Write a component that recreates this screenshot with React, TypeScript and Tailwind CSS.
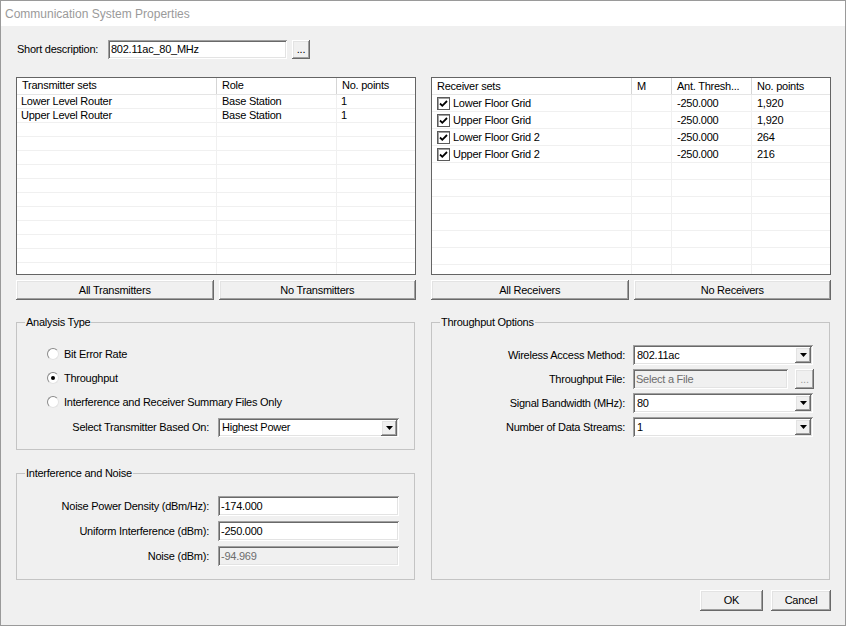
import React from 'react';

const raised =
  'bg-[#f0f0f0] shadow-[inset_-1px_-1px_#696969,inset_1px_1px_#ffffff,inset_-2px_-2px_#a0a0a0,inset_2px_2px_#e3e3e3]';
const sunken =
  'shadow-[inset_1px_1px_#a0a0a0,inset_-1px_-1px_#ffffff,inset_2px_2px_#696969,inset_-2px_-2px_#e3e3e3]';

const Button = ({ label, className }: { label: string; className: string }) => (
  <div className={`${raised} ${className} flex items-center justify-center`}>{label}</div>
);

const Field = ({ value, className, disabled }: { value: string; className: string; disabled?: boolean }) => (
  <div
    className={`${sunken} ${className} flex items-center pl-[3px] ${
      disabled ? 'bg-[#f0f0f0] text-[#6d6d6d]' : 'bg-white'
    }`}
  >
    {value}
  </div>
);

const Combo = ({ value, className }: { value: string; className: string }) => (
  <div className={`${sunken} ${className} flex items-center bg-white`}>
    <span className="flex-1 pl-[4px]">{value}</span>
    <div className={`${raised} mr-[2px] flex h-[16px] w-[16px] items-center justify-center`}>
      <svg width="7" height="4" viewBox="0 0 7 4">
        <path d="M0 0h7L3.5 4z" fill="#000" />
      </svg>
    </div>
  </div>
);

const Radio = ({ checked, label }: { checked?: boolean; label: string }) => (
  <div className="flex h-[24px] items-center">
    <div className="flex h-[12px] w-[12px] items-center justify-center rounded-full border border-t-[#8a8a8a] border-l-[#8a8a8a] border-r-[#e3e3e3] border-b-[#e3e3e3] bg-white">
      {checked && <div className="h-[4px] w-[4px] rounded-full bg-black" />}
    </div>
    <span className="ml-[5px]">{label}</span>
  </div>
);

const Check = () => (
  <div className="flex h-[13px] w-[13px] items-center justify-center border border-[#5a5a5a] bg-white shadow-[inset_1px_1px_#a0a0a0]">
    <svg width="9" height="9" viewBox="0 0 9 9">
      <path d="M1 4.5l2.3 2.3L8 2" stroke="#000" strokeWidth="1.8" fill="none" />
    </svg>
  </div>
);

const Group = ({ title, className, children }: { title: string; className: string; children: React.ReactNode }) => (
  <div className={`relative border border-[#c4c4c4] ${className}`}>
    <span className="absolute -top-[7px] left-[8px] bg-[#f0f0f0] px-[1px] leading-[13px]">{title}</span>
    {children}
  </div>
);

const txRows = [
  ['Lower Level Router', 'Base Station', '1'],
  ['Upper Level Router', 'Base Station', '1'],
];

const rxRows = [
  ['Lower Floor Grid', '', '-250.000', '1,920'],
  ['Upper Floor Grid', '', '-250.000', '1,920'],
  ['Lower Floor Grid 2', '', '-250.000', '264'],
  ['Upper Floor Grid 2', '', '-250.000', '216'],
];

const TransmitterTable = () => (
  <div className="h-[198px] w-[400px] overflow-hidden border border-[#646464] bg-white">
    <div className="grid h-[17px] grid-cols-[200px_120px_78px] border-b border-[#e5e5e5]">
      <div className="border-r border-[#d5d5d5] pl-[5px] leading-[15px]">Transmitter sets</div>
      <div className="border-r border-[#d5d5d5] pl-[5px] leading-[15px]">Role</div>
      <div className="pl-[5px] leading-[15px]">No. points</div>
    </div>
    {Array.from({ length: 13 }).map((_, i) => {
      const r = txRows[i] || ['', '', ''];
      return (
        <div key={i} className="grid h-[14px] grid-cols-[200px_120px_78px] border-b border-[#f0f0f0]">
          <div className="border-r border-[#f0f0f0] pl-[4px] leading-[13px]">{r[0]}</div>
          <div className="border-r border-[#f0f0f0] pl-[5px] leading-[13px]">{r[1]}</div>
          <div className="pl-[4px] leading-[13px]">{r[2]}</div>
        </div>
      );
    })}
  </div>
);

const ReceiverTable = () => (
  <div className="h-[198px] w-[400px] overflow-hidden border border-[#646464] bg-white">
    <div className="grid h-[17px] grid-cols-[200px_40px_80px_78px] border-b border-[#e5e5e5]">
      <div className="border-r border-[#d5d5d5] pl-[5px] leading-[16px]">Receiver sets</div>
      <div className="border-r border-[#d5d5d5] pl-[5px] leading-[16px]">M</div>
      <div className="border-r border-[#d5d5d5] pl-[5px] leading-[16px]">Ant. Thresh...</div>
      <div className="pl-[5px] leading-[16px]">No. points</div>
    </div>
    {Array.from({ length: 11 }).map((_, i) => {
      const r = rxRows[i];
      return (
        <div key={i} className="grid h-[17px] grid-cols-[200px_40px_80px_78px] border-b border-[#f0f0f0]">
          <div className="flex items-center border-r border-[#f0f0f0] pl-[5px]">
            {r && <Check />}
            {r && <span className="ml-[3px]">{r[0]}</span>}
          </div>
          <div className="border-r border-[#f0f0f0]" />
          <div className="flex items-center border-r border-[#f0f0f0] pl-[5px]">{r ? r[2] : ''}</div>
          <div className="flex items-center pl-[5px]">{r ? r[3] : ''}</div>
        </div>
      );
    })}
  </div>
);

const LabeledRow = ({ label, labelW, children }: { label: string; labelW: string; children: React.ReactNode }) => (
  <div className="flex items-center">
    <span className={`${labelW} text-right`}>{label}</span>
    {children}
  </div>
);

export default function App() {
  return (
    <div className="h-[627px] w-[847px] bg-white font-['Liberation_Sans',Arial,sans-serif] text-[11px] tracking-[-0.25px] text-black">
      <div className="flex h-[626px] w-[846px] flex-col border border-[#9a9a9a] bg-[#f0f0f0]">
        <div className="flex h-[25px] items-center bg-white pl-[4px] text-[12px] tracking-normal text-[#9a9a9a]">
          Communication System Properties
        </div>

        <div className="flex flex-col pl-[15px] pr-[14px]">
          <div className="mt-[14px] flex h-[19px] items-center">
            <span className="ml-[1px] w-[91px]">Short description:</span>
            <Field value="802.11ac_80_MHz" className="h-[19px] w-[179px]" />
            <Button label="..." className="ml-[5px] h-[19px] w-[18px]" />
          </div>

          <div className="mt-[18px] flex gap-[15px]">
            <TransmitterTable />
            <ReceiverTable />
          </div>

          <div className="mt-[5px] flex gap-[15px]">
            <div className="flex w-[400px] gap-[5px]">
              <Button label="All Transmitters" className="h-[20px] flex-1" />
              <Button label="No Transmitters" className="h-[20px] flex-1" />
            </div>
            <div className="flex w-[400px] gap-[5px]">
              <Button label="All Receivers" className="h-[20px] flex-1" />
              <Button label="No Receivers" className="h-[20px] flex-1" />
            </div>
          </div>

          <div className="mt-[22px] flex gap-[16px]">
            <div className="flex w-[399px] flex-col">
              <Group title="Analysis Type" className="h-[128px] pl-[30px] pt-[19px]">
                <Radio label="Bit Error Rate" />
                <Radio checked label="Throughput" />
                <Radio label="Interference and Receiver Summary Files Only" />
                <div className="-ml-[30px] mt-[4px]">
                  <LabeledRow label="Select Transmitter Based On:" labelW="w-[192px]">
                    <Combo value="Highest Power" className="ml-[9px] h-[19px] w-[181px]" />
                  </LabeledRow>
                </div>
              </Group>

              <Group title="Interference and Noise" className="mt-[23px] flex h-[107px] flex-col gap-[5px] pt-[22px]">
                <LabeledRow label="Noise Power Density (dBm/Hz):" labelW="w-[192px]">
                  <Field value="-174.000" className="ml-[9px] h-[20px] w-[181px]" />
                </LabeledRow>
                <LabeledRow label="Uniform Interference (dBm):" labelW="w-[192px]">
                  <Field value="-250.000" className="ml-[9px] h-[20px] w-[181px]" />
                </LabeledRow>
                <LabeledRow label="Noise (dBm):" labelW="w-[192px]">
                  <Field value="-94.969" disabled className="ml-[9px] h-[20px] w-[181px]" />
                </LabeledRow>
              </Group>
            </div>

            <Group title="Throughput Options" className="flex h-[258px] w-[399px] flex-col gap-[4px] pt-[22px]">
              <LabeledRow label="Wireless Access Method:" labelW="w-[193px]">
                <Combo value="802.11ac" className="ml-[8px] h-[20px] w-[180px]" />
              </LabeledRow>
              <LabeledRow label="Throughput File:" labelW="w-[193px]">
                <Field value="Select a File" disabled className="ml-[8px] h-[20px] w-[155px]" />
                <div className={`${raised} ml-[7px] flex h-[20px] w-[19px] items-center justify-center text-[#a0a0a0]`}>
                  ...
                </div>
              </LabeledRow>
              <LabeledRow label="Signal Bandwidth (MHz):" labelW="w-[193px]">
                <Combo value="80" className="ml-[8px] h-[20px] w-[180px]" />
              </LabeledRow>
              <LabeledRow label="Number of Data Streams:" labelW="w-[193px]">
                <Combo value="1" className="ml-[8px] h-[20px] w-[180px]" />
              </LabeledRow>
            </Group>
          </div>

          <div className="mt-[10px] flex justify-end gap-[8px]">
            <Button label="OK" className="h-[21px] w-[63px]" />
            <Button label="Cancel" className="h-[21px] w-[60px]" />
          </div>
        </div>
      </div>
    </div>
  );
}
